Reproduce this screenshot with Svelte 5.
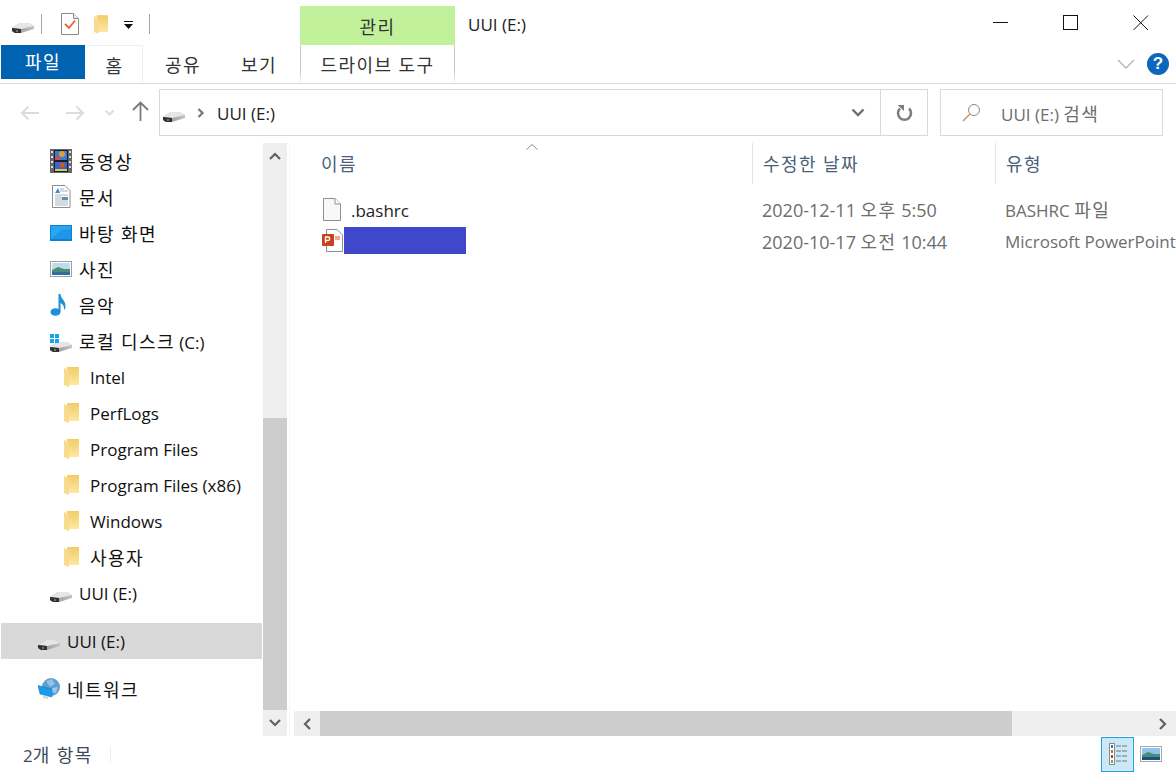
<script>
  // Explorer window showing drive E:, sidebar rows and file rows are plain data
  const navItems = [
    { label: '동영상', icon: 'video', level: 1 },
    { label: '문서', icon: 'doc', level: 1 },
    { label: '바탕 화면', icon: 'desktop', level: 1 },
    { label: '사진', icon: 'photo', level: 1 },
    { label: '음악', icon: 'music', level: 1 },
    { label: '로컬 디스크 (C:)', icon: 'sysdrive', level: 1 },
    { label: 'Intel', icon: 'folder', level: 2 },
    { label: 'PerfLogs', icon: 'folder', level: 2 },
    { label: 'Program Files', icon: 'folder', level: 2 },
    { label: 'Program Files (x86)', icon: 'folder', level: 2 },
    { label: 'Windows', icon: 'folder', level: 2 },
    { label: '사용자', icon: 'folder', level: 2 },
    { label: 'UUI (E:)', icon: 'drive', level: 1 },
  ];

  // Hangul is set wider than the latin text around it, so split labels into runs
  function runs(text) {
    return text
      .split(/([가-힣]+(?: [가-힣]+)*)/)
      .filter(Boolean)
      .map((s) => ({ s, ko: /[가-힣]/.test(s) }));
  }
</script>

{#snippet t(text)}
  <span class="txt">{#each runs(text) as r}<span class:ko={r.ko}>{r.s}</span>{/each}</span>
{/snippet}

{#snippet drive(w = 22)}
  <svg width={w} height="11" viewBox="0 0 22 11">
    <defs>
      <linearGradient id="drv" x1="0" x2="1" y1="0" y2="0">
        <stop offset="0" stop-color="#8d8d8d" />
        <stop offset="1" stop-color="#c4c4c4" />
      </linearGradient>
    </defs>
    <path d="M0 6 L8 1 H17 L22 4 V7 L9 11 H3 L0 9 Z" fill="url(#drv)" />
    <path d="M0 6 L8 1 H17 L22 4 L9 7 Z" fill="#e6e6e6" />
    <path d="M0 6 L9 7 V11 H3 L0 9 Z" fill="#303330" />
    <path d="M4 8.500 h2 v1 h-2 Z" fill="#7ad07e" />
  </svg>
{/snippet}

{#snippet folder(w = 15, h = 20)}
  <svg width={w} height={h} viewBox="0 0 15 20">
    <defs>
      <linearGradient id="fld" x1="0" x2="0" y1="0" y2="1">
        <stop offset="0" stop-color="#f2cd68" />
        <stop offset="1" stop-color="#fde7a2" />
      </linearGradient>
    </defs>
    <path d="M3 0 H15 V18 H3 Z" fill="url(#fld)" />
    <path d="M0 1 L5 3 V20 L0 18 Z" fill="#f7dc8e" />
  </svg>
{/snippet}

{#snippet navIcon(kind)}
  {#if kind === 'video'}
    <svg width="22" height="24" viewBox="0 0 22 24">
      <rect width="22" height="24" fill="#666" />
      <rect x="4" y="1" width="14" height="22" fill="#18202e" />
      <rect x="5" y="2" width="12" height="9" fill="#3b78d8" />
      <rect x="5" y="13" width="12" height="9" fill="#3468d0" />
      <circle cx="12" cy="5" r="3" fill="#e0a030" />
      <circle cx="12" cy="16" r="2.500" fill="#d4552a" />
      <rect x="5" y="8" width="5" height="3" fill="#d8503c" />
      <rect x="5" y="20" width="12" height="2" fill="#e0c84a" />
      <path d="M1 2h2v2H1zM1 7h2v2H1zM1 12h2v2H1zM1 17h2v2H1zM19 2h2v2h-2zM19 7h2v2h-2zM19 12h2v2h-2zM19 17h2v2h-2z" fill="#ddd" />
    </svg>
  {:else if kind === 'doc'}
    <svg width="22" height="24" viewBox="0 0 22 24">
      <path d="M2.500 .5 H15 L20 5.500 V22.500 H2.500 Z" fill="#fff" stroke="#8e8e8e" />
      <path d="M8 3 l-3 5 h5 Z" fill="#2c8fdc" />
      <path d="M10 4h4M10 6h8M5 10h13M5 12h7M5 14h7M5 16h13M5 18h13M5 20h13" stroke="#a9b6c2" />
      <rect x="12" y="12" width="6" height="3" fill="#5a8fb0" />
    </svg>
  {:else if kind === 'desktop'}
    <svg width="22" height="16" viewBox="0 0 22 16">
      <rect width="22" height="16" fill="#0f7fd1" />
      <rect x="1" y="1" width="20" height="13" fill="#29a6f0" />
      <path d="M1 14 L12 5 L21 4 V14 Z" fill="#1c96e6" />
    </svg>
  {:else if kind === 'photo'}
    <svg width="22" height="16" viewBox="0 0 22 16">
      <rect x=".5" y=".5" width="21" height="15" fill="#fff" stroke="#a0a0a0" />
      <rect x="2" y="2" width="18" height="12" fill="#bfdcee" />
      <path d="M2 9 L8 6 L14 8 L20 8 V14 H2 Z" fill="#4d8c76" />
      <rect x="2" y="11" width="18" height="3" fill="#2d6fa0" />
    </svg>
  {:else if kind === 'music'}
    <svg width="16" height="22" viewBox="0 0 16 22">
      <ellipse cx="5.500" cy="18" rx="5" ry="3.800" fill="#1e90dc" />
      <path d="M8.500 0 H10.500 C11 5 15.500 6 15.500 12 C15.500 14 15 15 14 16 C14.500 12 12.500 10 10.500 9 V18 H8.500 Z" fill="#1e90dc" />
    </svg>
  {:else if kind === 'sysdrive'}
    <span class="sys">
      <svg class="logo" width="9" height="9" viewBox="0 0 9 9"><path d="M0 0h4v4H0zM5 0h4v4H5zM0 5h4v4H0zM5 5h4v4H5z" fill="#16a4e8" /></svg>
      {@render drive()}
    </span>
  {:else if kind === 'drive'}
    <span class="low">{@render drive()}</span>
  {:else if kind === 'folder'}
    {@render folder(15, 20)}
  {:else if kind === 'net'}
    <svg width="22" height="22" viewBox="0 0 22 22">
      <circle cx="13" cy="9" r="9" fill="#5d9fd0" />
      <path d="M8 3 L14 1 L17 6 L12 9 Z" fill="#8fc4e8" />
      <path d="M14 10 L20 9 L18 15 L14 14 Z" fill="#9cc7e6" />
      <path d="M0 7.500 L14 11 V19 L2 16 Z" fill="#1b9bec" stroke="#167fc2" stroke-width=".6" />
      <path d="M5 17 L10 19 V21 L5 20 Z" fill="#cfd6dc" />
    </svg>
  {/if}
{/snippet}

<div class="win">
  <header class="titlebar">
    <div class="qat">
      {@render drive()}
      <i class="qsep"></i>
      <svg class="qdoc" width="18" height="22" viewBox="0 0 18 22">
        <path d="M.5 .5 H12.500 L17.500 5.500 V21.500 H.5 Z" fill="#fff" stroke="#8a8a8a" />
        <path d="M12.500 .5 V5.500 H17.500" fill="#eee" stroke="#8a8a8a" />
        <path d="M4 11 L8 15 L14 7.500" fill="none" stroke="#e8622a" stroke-width="1.800" />
      </svg>
      <span class="qfolder">{@render folder(14, 21)}</span>
      <svg class="qdrop" width="9" height="9" viewBox="0 0 9 9">
        <path d="M0 0h9v1H0zM0 3h9L4.500 8Z" fill="#111" />
      </svg>
      <i class="qsep last"></i>
    </div>
    <div class="ctx-head">{@render t('관리')}</div>
    <div class="win-title">UUI (E:)</div>
    <div class="controls">
      <svg width="16" height="16" viewBox="0 0 16 16"><path d="M0 7.500H15" stroke="#111" /></svg>
      <svg width="16" height="16" viewBox="0 0 16 16"><rect x=".5" y=".5" width="14" height="14" fill="none" stroke="#111" /></svg>
      <svg width="16" height="16" viewBox="0 0 16 16"><path d="M.5 .5L15 15M15 .5L.5 15" stroke="#111" fill="none" /></svg>
    </div>
  </header>

  <nav class="tabs">
    <div class="tab file">{@render t('파일')}</div>
    <div class="tab home">{@render t('홈')}</div>
    <div class="tab share">{@render t('공유')}</div>
    <div class="tab view">{@render t('보기')}</div>
    <div class="tab drive-tools">{@render t('드라이브 도구')}</div>
    <svg class="collapse" width="18" height="10" viewBox="0 0 18 10"><path d="M1 1 L9 9 L17 1" fill="none" stroke="#b4b4b4" stroke-width="1.300" /></svg>
    <span class="help">?</span>
  </nav>

  <div class="addr-row">
    <div class="nav-btns">
      <svg class="back" width="19" height="16" viewBox="0 0 19 16"><path d="M19 8H2M8.500 1.500L2 8l6.500 6.500" fill="none" stroke="#dcdcdc" stroke-width="2" /></svg>
      <svg class="fwd" width="19" height="16" viewBox="0 0 19 16"><path d="M0 8H17M10.500 1.500L17 8l-6.500 6.500" fill="none" stroke="#dcdcdc" stroke-width="2" /></svg>
      <svg class="recent" width="9" height="6" viewBox="0 0 9 6"><path d="M.5 .5L4.500 4.500L8.500 .5" fill="none" stroke="#dcdcdc" stroke-width="2" /></svg>
      <svg class="up" width="17" height="20" viewBox="0 0 17 20"><path d="M8.500 20V2M1 9L8.500 1.500L16 9" fill="none" stroke="#7a7a7a" stroke-width="1.800" /></svg>
    </div>
    <div class="address">
      <span class="low">{@render drive()}</span>
      <svg class="crumb" width="8" height="10" viewBox="0 0 8 10"><path d="M1.500 1L5.500 5L1.500 9" fill="none" stroke="#777" stroke-width="2.200" /></svg>
      <span class="path">UUI (E:)</span>
      <svg class="addr-drop" width="14" height="9" viewBox="0 0 14 9"><path d="M1.500 1.500L7 7L12.500 1.500" fill="none" stroke="#6f6f6f" stroke-width="2.400" /></svg>
      <div class="refresh">
        <svg width="17" height="18" viewBox="0 0 17 18">
          <path d="M4 4.500A6.500 6.500 0 1 0 13 4.500" fill="none" stroke="#7d7d7d" stroke-width="2.500" />
          <path d="M1.500 1H8V7Z" fill="#7d7d7d" />
        </svg>
      </div>
    </div>
    <div class="search">
      <svg width="19" height="19" viewBox="0 0 19 19">
        <circle cx="12" cy="7" r="5.500" fill="none" stroke="#8a8a8a" />
        <path d="M8 11L1 18" stroke="#c48a5a" stroke-width="1.200" />
      </svg>
      {@render t('UUI (E:) 검색')}
    </div>
  </div>

  <div class="main">
    <aside class="sidebar">
      <div class="tree">
        {#each navItems as item}
          <div class="row" class:child={item.level === 2}>
            <span class="ico">{@render navIcon(item.icon)}</span>
            {@render t(item.label)}
          </div>
        {/each}
        <div class="row root selected">
          <span class="ico">{@render navIcon('drive')}</span>
          {@render t('UUI (E:)')}
        </div>
        <div class="row root">
          <span class="ico">{@render navIcon('net')}</span>
          {@render t('네트워크')}
        </div>
      </div>
      <div class="vscroll">
        <div class="sb-btn up-btn">
          <svg width="12" height="8" viewBox="0 0 12 8"><path d="M1 7L6 2L11 7" fill="none" stroke="#606060" stroke-width="2.200" /></svg>
        </div>
        <div class="sb-space"></div>
        <div class="sb-thumb"></div>
        <div class="sb-btn down-btn">
          <svg width="12" height="8" viewBox="0 0 12 8"><path d="M1 1L6 6L11 1" fill="none" stroke="#606060" stroke-width="2.200" /></svg>
        </div>
      </div>
    </aside>

    <section class="content">
      <div class="col-head">
        <svg class="sort" width="12" height="6" viewBox="0 0 12 6"><path d="M.5 5.500L6 .5L11.500 5.500" fill="none" stroke="#888" /></svg>
        <div class="col name">{@render t('이름')}</div>
        <div class="col date">{@render t('수정한 날짜')}</div>
        <div class="col type">{@render t('유형')}</div>
      </div>
      <div class="files">
        <div class="file-row">
          <div class="f-name">
            <svg class="f-ico" width="18" height="23" viewBox="0 0 18 23">
              <path d="M.5 .5 H12 L17.500 6 V22.500 H.5 Z" fill="#f7f8f9" stroke="#8f8f8f" />
              <path d="M12 .5V6H17.500" fill="#fff" stroke="#8f8f8f" />
            </svg>
            <span>.bashrc</span>
          </div>
          <div class="f-date">{@render t('2020-12-11 오후 5:50')}</div>
          <div class="f-type">{@render t('BASHRC 파일')}</div>
        </div>
        <div class="file-row">
          <div class="f-name">
            <svg class="f-ico ppt" width="21" height="23" viewBox="0 0 21 23">
              <path d="M4.500 .5 H15 L20.500 6 V22.500 H4.500 Z" fill="#fff" stroke="#8f8f8f" />
              <path d="M13 7 h5 v4 h-5 Z" fill="#f2a78f" />
              <rect y="5" width="12" height="12" rx="1" fill="#c8401c" />
              <path d="M3.500 14V8h2.500a1.700 1.700 0 0 1 0 3.500H3.500" fill="none" stroke="#fff" stroke-width="1.300" />
            </svg>
            <span class="redact"></span>
          </div>
          <div class="f-date">{@render t('2020-10-17 오전 10:44')}</div>
          <div class="f-type">Microsoft PowerPoint</div>
        </div>
      </div>
      <div class="hscroll">
        <div class="h-btn">
          <svg width="8" height="12" viewBox="0 0 8 12"><path d="M7 1L2 6L7 11" fill="none" stroke="#606060" stroke-width="2.200" /></svg>
        </div>
        <div class="h-thumb"></div>
        <div class="h-space"></div>
        <div class="h-btn right">
          <svg width="8" height="12" viewBox="0 0 8 12"><path d="M1 1L6 6L1 11" fill="none" stroke="#606060" stroke-width="2.200" /></svg>
        </div>
      </div>
    </section>
  </div>

  <footer class="status">
    <span class="count">{@render t('2개 항목')}</span>
    <i class="st-sep"></i>
    <div class="view-btns">
      <div class="vb active">
        <svg width="18" height="22" viewBox="0 0 18 22">
          <rect x=".5" y=".5" width="5" height="21" fill="#fff" stroke="#8a8a8a" />
          <rect x="2" y="2" width="2" height="3" fill="#3a78b0" />
          <rect x="2" y="7" width="2" height="3" fill="#b07a3a" />
          <rect x="2" y="12" width="2" height="3" fill="#c8342c" />
          <rect x="2" y="17" width="2" height="3" fill="#7aa84a" />
          <path d="M7 3h5M13 3h5M7 8h5M13 8h5M7 13h5M13 13h5M7 18h5M13 18h5" stroke="#777" />
        </svg>
      </div>
      <div class="vb">
        <svg width="22" height="16" viewBox="0 0 22 16">
          <rect x=".5" y=".5" width="21" height="15" fill="#fff" stroke="#a8a8a8" />
          <rect x="2" y="2" width="18" height="12" fill="#8fc4ee" />
          <path d="M2 9 L8 6 L14 8 L20 8 V14 H2 Z" fill="#4d8c76" />
          <rect x="2" y="11" width="18" height="3" fill="#1d4f86" />
        </svg>
      </div>
    </div>
  </footer>
</div>

<style>
  :global(body) { background: #fff; }
  .win {
    width: 1176px; height: 772px; overflow: hidden; display: flex; flex-direction: column;
    background: #fff; color: #1a1a1a;
    font-family: "Open Sans", "Noto Sans CJK KR", sans-serif; font-size: 17px;
  }
  .win :global(svg) { display: block; flex: none; }
  .txt { white-space: pre; }
  .ko { font-size: 18px; letter-spacing: 1.4px; }
  .low { display: block; padding-top: 7px; }

  .titlebar { height: 45px; display: flex; position: relative; }
  .qat { width: 300px; flex: none; display: flex; align-items: flex-start; padding-left: 12px; box-sizing: border-box; }
  .qat > :global(svg:first-child) { margin-top: 22px; }
  .qsep { width: 1px; height: 20px; background: #a8a8a8; margin: 14px 0 0 7px; flex: none; }
  .qsep.last { margin-left: 16px; }
  .qdoc { margin: 13px 0 0 19px; }
  .qfolder { margin: 14px 0 0 15px; }
  .qdrop { margin: 21px 0 0 16px; }
  .ctx-head {
    width: 155px; height: 39px; margin-top: 6px; background: #c2f19c; flex: none;
    display: flex; align-items: center; justify-content: center; color: #333;
  }
  .win-title { margin-left: 13px; padding-top: 13px; color: #222; }
  .controls { margin-left: auto; display: flex; gap: 54px; padding: 15px 27px 0 0; }

  .tabs { height: 38px; display: flex; align-items: flex-start; border-bottom: 1px solid #dadada; box-sizing: content-box; position: relative; }
  .tab { height: 38px; display: flex; align-items: center; justify-content: center; flex: none; color: #333; box-sizing: border-box; }
  .tab.file { width: 84px; height: 34px; margin-left: 1px; background: #0063b1; color: #fff; padding-bottom: 2px; }
  .tab.home { width: 58px; border: 1px solid #f0f0f0; border-bottom: none; border-left: none; padding-left: 2px; }
  .tab.share { width: 80px; }
  .tab.view { width: 72px; }
  .tab.drive-tools {
    width: 155px; margin-left: 5px; padding-bottom: 1px;
    border-left: 1px solid #cfcfcf; border-right: 1px solid #cfcfcf;
    border-image: linear-gradient(#c8c8c8, #c8c8c8 70%, #fff) 1;
  }
  .collapse { margin: 14px 0 0 662px; }
  .help {
    width: 22px; height: 22px; margin: 8px 0 0 12px; border-radius: 50%; background: #0c66bc; color: #fff;
    display: flex; align-items: center; justify-content: center; font-weight: 700; font-size: 17px; font-family: "Liberation Sans", sans-serif;
  }

  .addr-row { height: 47px; margin-top: 5px; display: flex; flex: none; }
  .nav-btns { width: 159px; flex: none; display: flex; align-items: center; padding-left: 20px; box-sizing: border-box; }
  .fwd { margin-left: 27px; }
  .recent { margin-left: 20px; }
  .up { margin: -3px 0 0 18px; }
  .address {
    width: 769px; flex: none; box-sizing: border-box; border: 1px solid #d9d9d9;
    display: flex; align-items: center; padding-left: 3px;
  }
  .crumb { margin-left: 12px; }
  .path { margin-left: 12px; padding-top: 1px; color: #222; }
  .addr-drop { margin-left: auto; margin-right: 15px; }
  .refresh { width: 46px; height: 100%; border-left: 1px solid #d9d9d9; display: flex; align-items: center; justify-content: center; }
  .search {
    width: 223px; margin-left: 12px; flex: none; box-sizing: border-box; border: 1px solid #d9d9d9;
    display: flex; align-items: center; gap: 20px; padding-left: 21px; color: #6d6d6d;
  }

  .main { flex: none; height: 593px; margin-top: 7px; display: flex; }
  .sidebar { width: 287px; flex: none; display: flex; }
  .tree { width: 261px; margin-left: 1px; flex: none; overflow: hidden; }
  .row { height: 36px; display: flex; align-items: center; padding-left: 49px; color: #111; }
  .row .ico { width: 29px; flex: none; display: flex; }
  .row.child { padding-left: 63px; }
  .row.child .ico { width: 26px; }
  .row.root { padding-left: 37px; margin-top: 12px; }
  .row.root + .row.root { margin-top: 12px; }
  .selected { background: #d9d9d9; }
  .sys { position: relative; display: block; padding-top: 7px; margin-top: 4px; }
  .sys .logo { position: absolute; left: 0; top: 0; }

  .vscroll { width: 24px; margin-left: 1px; flex: none; display: flex; flex-direction: column; background: #efefef; }
  .sb-btn { height: 26px; flex: none; display: flex; align-items: center; justify-content: center; background: #efefef; }
  .sb-space { height: 249px; }
  .sb-thumb { flex: 1; background: #cdcdcd; }

  .content { flex: 1; min-width: 0; display: flex; flex-direction: column; margin-left: 2px; border-left: 1px solid #f6f6f6; }
  .col-head { height: 41px; display: flex; flex: none; position: relative; color: #4c607a; }
  .sort { position: absolute; left: 236px; top: 1px; }
  .col { display: flex; align-items: center; box-sizing: border-box; padding: 0 0 2px 10px; flex: none; }
  .col.name { width: 462px; padding-left: 31px; }
  .col.date { width: 243px; border-left: 1px solid #e5e5e5; }
  .col.type { border-left: 1px solid #e5e5e5; }
  .files { flex: 1; padding-top: 10px; }
  .file-row { height: 32px; display: flex; align-items: center; white-space: nowrap; }
  .f-name { width: 472px; flex: none; display: flex; align-items: center; padding-left: 33px; box-sizing: border-box; color: #222; }
  .f-ico { margin: 0 10px 2px 0; }
  .f-ico.ppt { margin: 0 1px 4px -1px; }
  .redact { width: 122px; height: 27px; margin-bottom: 4px; background: #3f47cb; }
  .f-date { width: 243px; flex: none; color: #6d6d6d; font-size: 18px; padding-bottom: 2px; }
  .f-type { color: #6d6d6d; padding-bottom: 2px; }

  .hscroll { height: 25px; flex: none; margin-left: 4px; display: flex; background: #efefef; }
  .h-btn { width: 26px; flex: none; display: flex; align-items: center; justify-content: center; }
  .h-thumb { width: 692px; background: #cdcdcd; flex: none; }
  .h-space { flex: 1; }

  .status { flex: 1; display: flex; align-items: center; padding-left: 23px; color: #3d4a5c; }
  .st-sep { width: 1px; height: 17px; background: #f0f0f0; margin-left: 17px; }
  .view-btns { margin-left: auto; display: flex; align-items: center; height: 100%; }
  .vb { width: 33px; height: 35px; box-sizing: border-box; display: flex; align-items: center; justify-content: center; margin-right: 2px; }
  .vb.active { background: #cbe8f6; border: 1px solid #26a0da; margin-right: 0; }
  .vb:last-child { width: 34px; margin-right: 8px; }
</style>
